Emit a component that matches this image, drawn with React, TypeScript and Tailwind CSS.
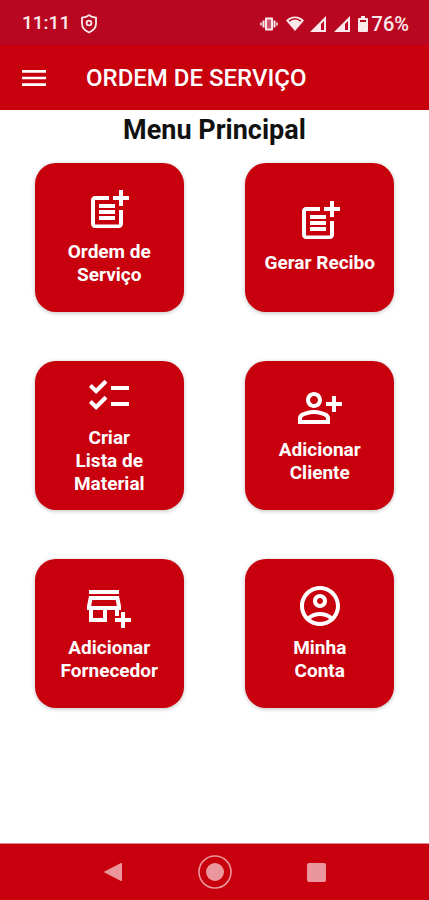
import type { IconType } from "react-icons";
import {
  MdChecklist,
  MdMenu,
  MdOutlineAccountCircle,
  MdOutlineAddBusiness,
  MdOutlinePersonAddAlt,
  MdPostAdd,
} from "react-icons/md";

type MenuItem = {
  id: string;
  icon: IconType;
  lines: string[];
};

const menuItems: MenuItem[] = [
  { id: "order", icon: MdPostAdd, lines: ["Ordem de", "Serviço"] },
  { id: "receipt", icon: MdPostAdd, lines: ["Gerar Recibo"] },
  { id: "materials", icon: MdChecklist, lines: ["Criar", "Lista de", "Material"] },
  { id: "client", icon: MdOutlinePersonAddAlt, lines: ["Adicionar", "Cliente"] },
  { id: "supplier", icon: MdOutlineAddBusiness, lines: ["Adicionar", "Fornecedor"] },
  { id: "account", icon: MdOutlineAccountCircle, lines: ["Minha", "Conta"] },
];

function ShieldIcon() {
  return (
    <svg viewBox="0 0 18 20" className="h-5 w-[18px]" fill="none" stroke="currentColor">
      <path
        d="M9 1.2c1.8 1.6 4 2.3 7 2.5v5.8c0 4-2.8 7.2-7 9-4.2-1.8-7-5-7-9V3.7c3-.2 5.2-.9 7-2.5z"
        strokeWidth="1.8"
        strokeLinejoin="round"
      />
      <circle cx="9" cy="9" r="2.4" strokeWidth="1.8" />
    </svg>
  );
}

function VibrateIcon() {
  return (
    <svg viewBox="0 0 18 14" className="h-[14px] w-[18px]" fill="none" stroke="currentColor">
      <path d="M6 1.5h6v11H6z" fill="currentColor" fillOpacity="0.35" strokeWidth="2" strokeLinejoin="round" />
      <path d="M3.5 3.5v7M14.5 3.5v7" strokeWidth="2" />
      <path d="M1 5.5v3M17 5.5v3" strokeWidth="1.6" />
    </svg>
  );
}

function WifiIcon() {
  return (
    <svg viewBox="0 0 18 15" className="h-[15px] w-[18px]">
      <path d="M0 4.5C5-.8 13-.8 18 4.5L9 15z" fill="currentColor" />
      <path d="M3.2 5.2c3.6-3 8-3 11.6 0" fill="none" stroke="#b90722" strokeWidth="1.6" />
    </svg>
  );
}

function SignalIcon() {
  return (
    <svg viewBox="0 0 16 16" className="h-4 w-4">
      <path d="M0 16 16 0v16z" fill="currentColor" />
      <path d="M11 8l3-3v9h-3z" fill="#b90722" />
    </svg>
  );
}

function BatteryIcon() {
  return (
    <svg viewBox="0 0 10 16" className="h-4 w-[10px]">
      <path d="M3 0h4v2h2a1 1 0 0 1 1 1v12a1 1 0 0 1-1 1H1a1 1 0 0 1-1-1V3a1 1 0 0 1 1-1h2z" fill="currentColor" />
      <path d="M2 4h6v2H2z" fill="#b90722" />
    </svg>
  );
}

function StatusBar() {
  return (
    <div className="flex h-[45px] items-center justify-between bg-[#b90722] pt-0.5 pr-5 pl-[22px] text-[#fbe9ec]">
      <div className="flex items-center gap-2.5">
        <span className="text-[19px] font-medium">11:11</span>
        <ShieldIcon />
      </div>

      <div className="flex items-center gap-2">
        <VibrateIcon />
        <div className="flex items-center gap-1.5">
          <WifiIcon />
          <SignalIcon />
        </div>
        <SignalIcon />
        <div className="flex items-center gap-1">
          <BatteryIcon />
          <span className="text-xl font-medium">76%</span>
        </div>
      </div>
    </div>
  );
}

function MenuCard({ item }: { item: MenuItem }) {
  const Icon = item.icon;

  return (
    <button
      type="button"
      className="flex min-h-[149px] w-[149px] flex-col items-center justify-center gap-1.5 rounded-[21px] bg-[#c8000d] pb-1 text-white shadow-[0_1px_4px_rgba(0,0,0,0.25)]"
    >
      <Icon className="size-12" aria-hidden="true" />
      <span className="text-[19px] leading-[23px] font-bold">
        {item.lines.map((line) => (
          <span key={line} className="block">
            {line}
          </span>
        ))}
      </span>
    </button>
  );
}

function NavigationBar() {
  return (
    <nav className="flex h-[57px] items-center justify-center gap-[68px] border-t border-[#e08a90] bg-[#c8000d] text-[#eb969c]">
      <button type="button" aria-label="Voltar" className="flex w-[34px] justify-center">
        <svg viewBox="0 0 18 20" className="h-5 w-[18px]" fill="currentColor">
          <path d="M17 1a.7.7 0 0 1 1 .7v16.6a.7.7 0 0 1-1 .7L.6 10.6a.7.7 0 0 1 0-1.2z" />
        </svg>
      </button>
      <button type="button" aria-label="Início">
        <svg viewBox="0 0 34 34" className="size-[34px]">
          <circle cx="17" cy="17" r="16" fill="none" stroke="currentColor" strokeWidth="1.6" />
          <circle cx="17" cy="17" r="9" fill="currentColor" />
        </svg>
      </button>
      <button type="button" aria-label="Recentes" className="flex w-[34px] justify-center">
        <span className="size-[19px] rounded-xs bg-current" />
      </button>
    </nav>
  );
}

export default function App() {
  return (
    <div className="flex min-h-screen flex-col bg-white font-[Roboto,sans-serif]">
      <StatusBar />

      <header className="flex h-[65px] items-center gap-9 bg-[#c8000d] pl-[18px] text-white">
        <button type="button" aria-label="Abrir menu">
          <MdMenu className="size-8" />
        </button>
        <h1 className="text-2xl font-medium">ORDEM DE SERVIÇO</h1>
      </header>

      <main className="flex-1">
        <h2 className="pt-1 text-center text-[27px] leading-8 font-bold text-[#111111]">
          Menu Principal
        </h2>

        <div className="mt-[17px] grid grid-cols-2 justify-items-center gap-y-[49px] px-1">
          {menuItems.map((item) => (
            <MenuCard key={item.id} item={item} />
          ))}
        </div>
      </main>

      <NavigationBar />
    </div>
  );
}
